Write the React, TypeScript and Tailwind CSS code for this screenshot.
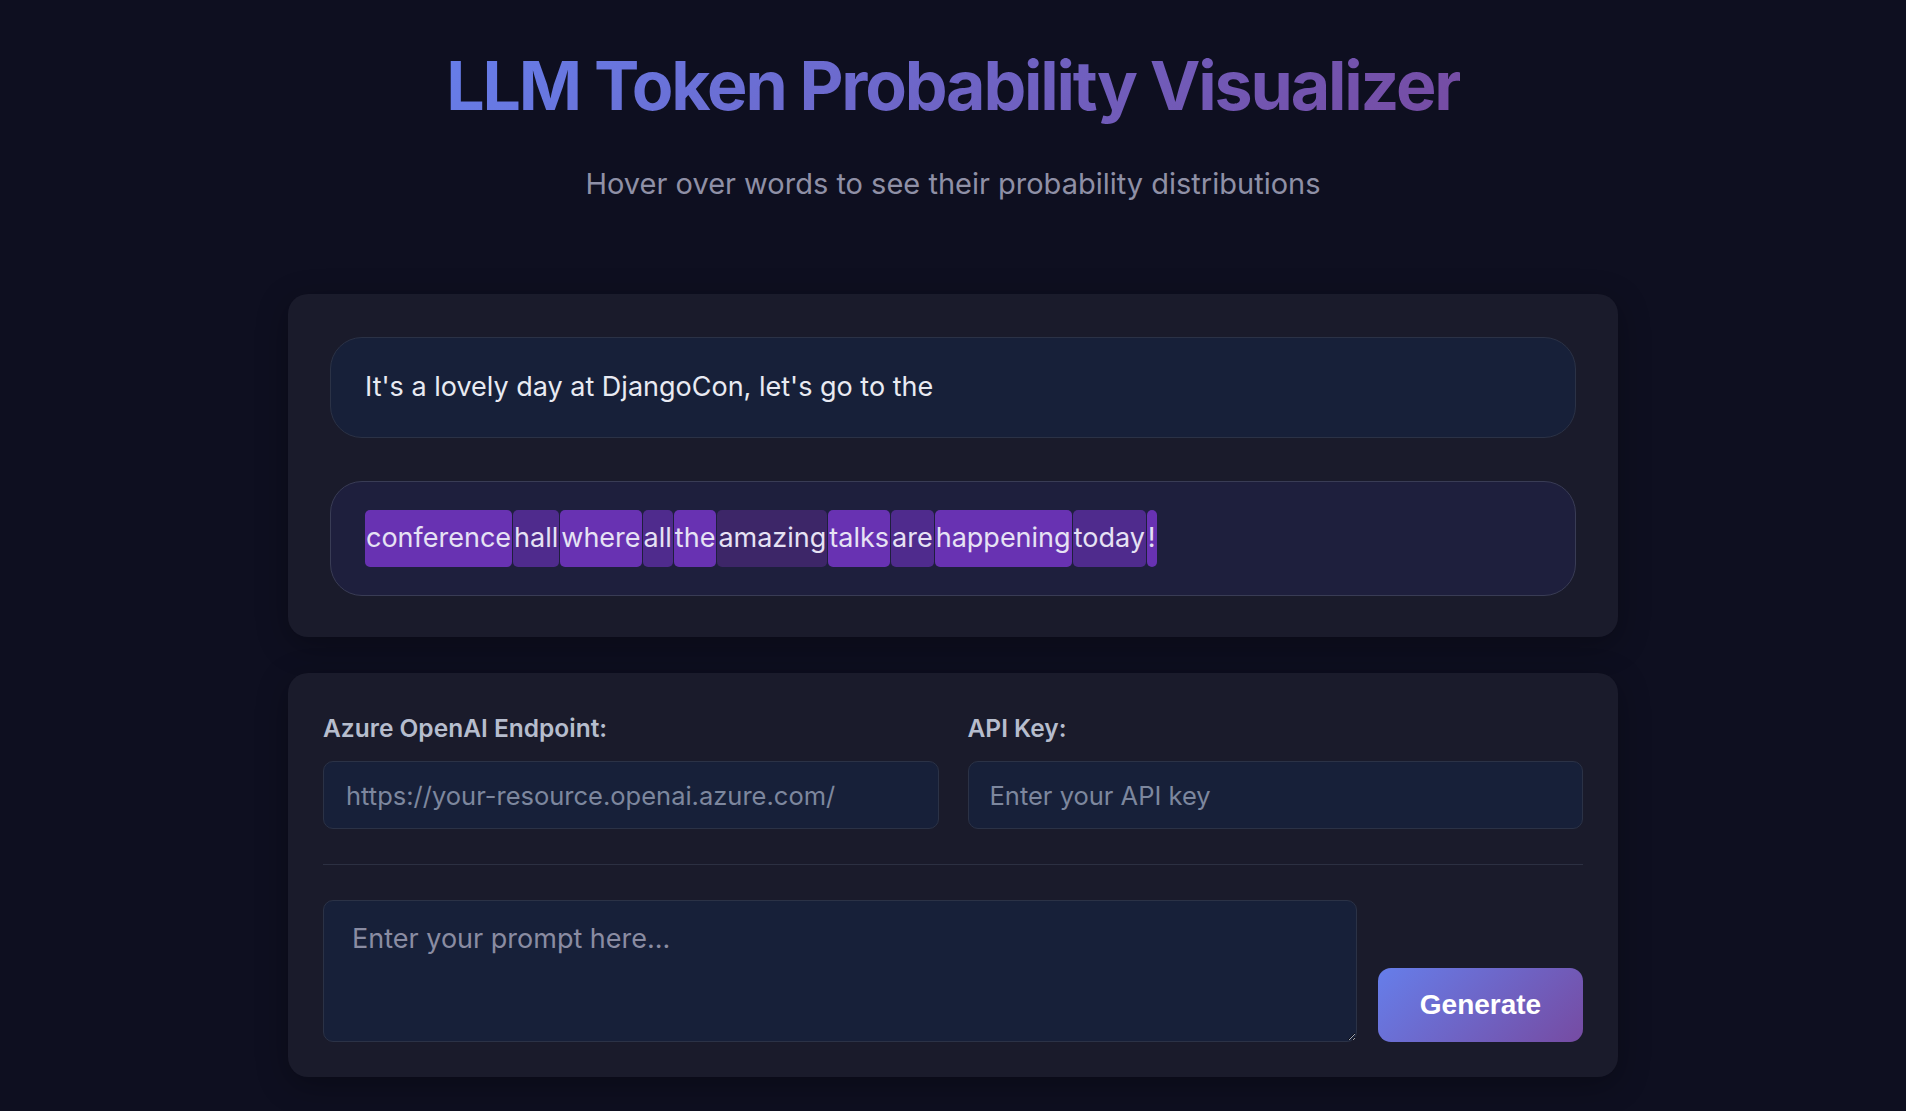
import React from "react";

const tokens: { t: string; c: string }[] = [
  { t: "conference", c: "bg-[#6832b2]" },
  { t: "hall", c: "bg-[#4f2b8d]" },
  { t: "where", c: "bg-[#6832b2]" },
  { t: "all", c: "bg-[#4f2b8d]" },
  { t: "the", c: "bg-[#6832b2]" },
  { t: "amazing", c: "bg-[#3d2668]" },
  { t: "talks", c: "bg-[#6832b2]" },
  { t: "are", c: "bg-[#4f2b8d]" },
  { t: "happening", c: "bg-[#6832b2]" },
  { t: "today", c: "bg-[#4f2b8d]" },
  { t: "!", c: "bg-[#6832b2]" },
];

export default function App() {
  return (
    <div className="min-h-screen w-full bg-[#0e0f20] font-['Inter','Noto_Sans',sans-serif]">
      <div className="w-[1330px] mx-auto pt-[43px] pb-[40px]">
        <div className="text-center">
          <h1 className="inline-block text-[68px] leading-[84px] font-bold tracking-[-0.032em] bg-[linear-gradient(135deg,#667eea_0%,#764ba2_100%)] bg-clip-text text-transparent">
            LLM Token Probability Visualizer
          </h1>
        </div>
        <p className="mt-[34px] text-center text-[29px] leading-[45px] text-[#8f90a6]">
          Hover over words to see their probability distributions
        </p>

        <div className="mt-[88px] rounded-[20px] bg-[#1a1b2b] pt-[43px] pb-[41px] px-[42px] flex flex-col gap-[43px] shadow-[0_8px_32px_rgba(0,0,0,0.3)]">
          <div className="h-[101px] rounded-[32px] border border-[#2b3246] bg-[#172039] pl-[34px] flex items-center text-[27px] text-[#e8eaf2]">
            It's a lovely day at DjangoCon, let's go to the
          </div>
          <div className="h-[115px] rounded-[32px] border border-[#393c55] bg-[#1e1f3d] pl-[34px] flex items-center">
            <div className="flex items-center gap-[1px]">
              {tokens.map((tk, i) => (
                <span
                  key={i}
                  className={`${tk.c} h-[57px] rounded-[5px] px-[1px] flex items-center text-[27px] text-[#e6e2f4]`}
                >
                  {tk.t}
                </span>
              ))}
            </div>
          </div>
        </div>

        <div className="mt-[36px] rounded-[20px] bg-[#1a1b2b] p-[35px] shadow-[0_8px_32px_rgba(0,0,0,0.3)]">
          <div className="grid grid-cols-2 gap-[29px]">
            <div>
              <div className="h-[40px] leading-[40px] mb-[13px] text-[24.5px] font-semibold text-[#b6bdcd]">
                Azure OpenAI Endpoint:
              </div>
              <input
                className="w-full h-[68px] rounded-[10px] border border-[#2b3246] bg-[#172039] px-[22px] text-[25.5px] text-[#e8eaf2] outline-none placeholder:text-[#7d879e]"
                placeholder="https://your-resource.openai.azure.com/"
              />
            </div>
            <div>
              <div className="h-[40px] leading-[40px] mb-[13px] text-[24.5px] font-semibold text-[#b6bdcd]">
                API Key:
              </div>
              <input
                type="password"
                className="w-full h-[68px] rounded-[10px] border border-[#2b3246] bg-[#172039] px-[21px] text-[25.5px] text-[#e8eaf2] outline-none placeholder:text-[#7d879e]"
                placeholder="Enter your API key"
              />
            </div>
          </div>
          <div className="my-[35px] h-px bg-[#2c3042]" />
          <div className="flex items-end gap-[21px]">
            <textarea
              className="flex-1 h-[142px] rounded-[10px] border border-[#2b3246] bg-[#172039] px-[28px] pt-[18px] text-[27px] text-[#e8eaf2] outline-none placeholder:text-[#8a8ca2]"
              placeholder="Enter your prompt here..."
            />
            <button className="w-[205px] h-[74px] rounded-[13px] bg-[linear-gradient(135deg,#667eea_0%,#764ba2_100%)] text-white text-[28px] font-bold font-['Liberation_Sans','Arial',sans-serif]">
              Generate
            </button>
          </div>
        </div>
      </div>
    </div>
  );
}
